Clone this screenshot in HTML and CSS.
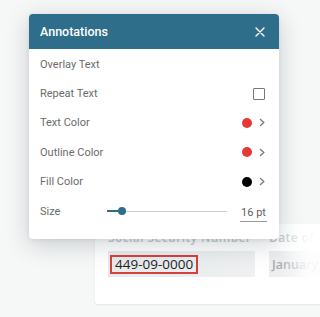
FILE: index.html
```html
<!DOCTYPE html>
<html>
<head>
<meta charset="utf-8">
<link rel="stylesheet" href="styles.css">
</head>
<body>
<div class="page">
  <div class="card">
    <div class="cols">
      <div class="col col-1">
        <div class="label">Social Security Number</div>
        <div class="field field-1"><span class="redact">449-09-0000</span></div>
      </div>
      <div class="col col-2">
        <div class="label">Date of</div>
        <div class="field field-2"><span class="muted">January</span></div>
      </div>
    </div>
    <div class="fade"></div>
  </div>

  <div class="dialog">
    <div class="dlg-head">
      <span class="dlg-title">Annotations</span>
      <svg class="close" width="10" height="10" viewBox="0 0 10 10"><path d="M1 1L9 9M9 1L1 9" stroke="#fff" stroke-width="1.4" stroke-linecap="round"/></svg>
    </div>
    <div class="dlg-body">
      <div class="row"><span class="rlabel">Overlay Text</span></div>
      <div class="row"><span class="rlabel">Repeat Text</span><span class="check"></span></div>
      <div class="row"><span class="rlabel">Text Color</span><span class="ctrl"><span class="dot red"></span><svg class="chev" width="6" height="9" viewBox="0 0 6 9"><path d="M1 1L4.8 4.5L1 8" fill="none" stroke="#7a7a7a" stroke-width="1.3"/></svg></span></div>
      <div class="row"><span class="rlabel">Outline Color</span><span class="ctrl"><span class="dot red"></span><svg class="chev" width="6" height="9" viewBox="0 0 6 9"><path d="M1 1L4.8 4.5L1 8" fill="none" stroke="#7a7a7a" stroke-width="1.3"/></svg></span></div>
      <div class="row"><span class="rlabel">Fill Color</span><span class="ctrl"><span class="dot black"></span><svg class="chev" width="6" height="9" viewBox="0 0 6 9"><path d="M1 1L4.8 4.5L1 8" fill="none" stroke="#7a7a7a" stroke-width="1.3"/></svg></span></div>
      <div class="row size-row">
        <span class="rlabel size-label">Size</span>
        <span class="slider"><span class="fill"></span><span class="thumb"></span></span>
        <span class="pt">16 pt</span>
      </div>
    </div>
  </div>
</div>
</body>
</html>
```

FILE: styles.css
```css
* { box-sizing: border-box; }
html, body { margin: 0; padding: 0; }
body {
  width: 320px;
  height: 317px;
  overflow: hidden;
  background: #f6f7f7;
  font-family: Roboto, "Liberation Sans", sans-serif;
}
.page {
  position: relative;
  width: 320px;
  height: 317px;
  padding-top: 224px;
  padding-left: 95px;
}
.card {
  position: relative;
  width: 225px;
  height: 80px;
  background: #fff;
  border-radius: 3px 0 0 3px;
  box-shadow: 0 1px 2px rgba(0,0,0,0.08);
  padding: 7px 0 0 13px;
  overflow: hidden;
}
.cols {
  display: flex;
  gap: 14px;
}
.col-1 { width: 147px; flex: none; }
.col-2 { width: 60px; flex: none; }
.label {
  font-family: "Open Sans", sans-serif;
  font-size: 12px;
  font-weight: 600;
  line-height: 13px;
  color: #c0ccd5;
  white-space: nowrap;
  letter-spacing: 0.4px;
}
.field {
  margin-top: 7px;
  height: 26px;
  display: flex;
  align-items: center;
  padding-left: 2px;
}
.field-1 { background: linear-gradient(90deg, #e6eaec, #eef0f1); }
.field-2 { background: #eceeef; padding-left: 3px; }
.redact {
  font-family: "Open Sans", sans-serif;
  font-size: 13.5px;
  color: #1e1e1e;
  border: 2px solid #d8403b;
  height: 19px;
  line-height: 15px;
  padding: 0 3px;
  white-space: nowrap;
}
.muted {
  font-family: "Open Sans", sans-serif;
  font-size: 12.5px;
  font-weight: 600;
  color: #a8adb0;
  white-space: nowrap;
}
.fade {
  position: absolute;
  top: 0;
  right: 0;
  width: 40px;
  height: 100%;
  background: linear-gradient(90deg, rgba(255,255,255,0), rgba(255,255,255,0.9) 70%);
}
.dialog {
  position: absolute;
  left: 29px;
  top: 14px;
  width: 250px;
  height: 225px;
  background: #fff;
  border-radius: 4px;
  box-shadow: 0 6px 24px rgba(30,50,60,0.2), 0 1px 4px rgba(0,0,0,0.08);
  overflow: hidden;
}
.dlg-head {
  height: 35px;
  background: #2e6e8a;
  display: flex;
  align-items: center;
  justify-content: space-between;
  padding: 0 14px 0 11px;
}
.dlg-title {
  color: #fff;
  font-size: 12.5px;
  font-weight: 500;
}
.close { display: block; }
.dlg-body {
  padding-top: 0.5px;
}
.row {
  height: 29.4px;
  display: flex;
  align-items: center;
  justify-content: space-between;
  padding: 0 14px 0 11px;
}
.rlabel {
  font-size: 11px;
  color: #6b6b6b;
}
.check {
  width: 12px;
  height: 12px;
  border: 1.5px solid #787878;
  border-radius: 1px;
}
.ctrl {
  display: flex;
  align-items: center;
  gap: 7px;
}
.dot {
  width: 10px;
  height: 10px;
  border-radius: 50%;
}
.red { background: #e53935; }
.black { background: #000; }
.chev { display: block; }
.size-row {
  justify-content: flex-start;
  padding-right: 12px;
}
.size-label { width: 67px; flex: none; }
.slider {
  position: relative;
  width: 120px;
  height: 1px;
  background: #c9cdcf;
  flex: none;
}
.fill {
  position: absolute;
  left: 0;
  top: -0.5px;
  width: 15px;
  height: 2px;
  background: #2e6e8a;
}
.thumb {
  position: absolute;
  left: 11px;
  top: -3.5px;
  width: 8px;
  height: 8px;
  border-radius: 50%;
  background: #2e6e8a;
}
.pt {
  margin-left: 13px;
  width: 27px;
  text-align: center;
  font-size: 11px;
  color: #5f5f5f;
  border-bottom: 1px solid #9a9a9a;
  padding: 1px 0 2px;
  position: relative;
  top: 2px;
}
```
